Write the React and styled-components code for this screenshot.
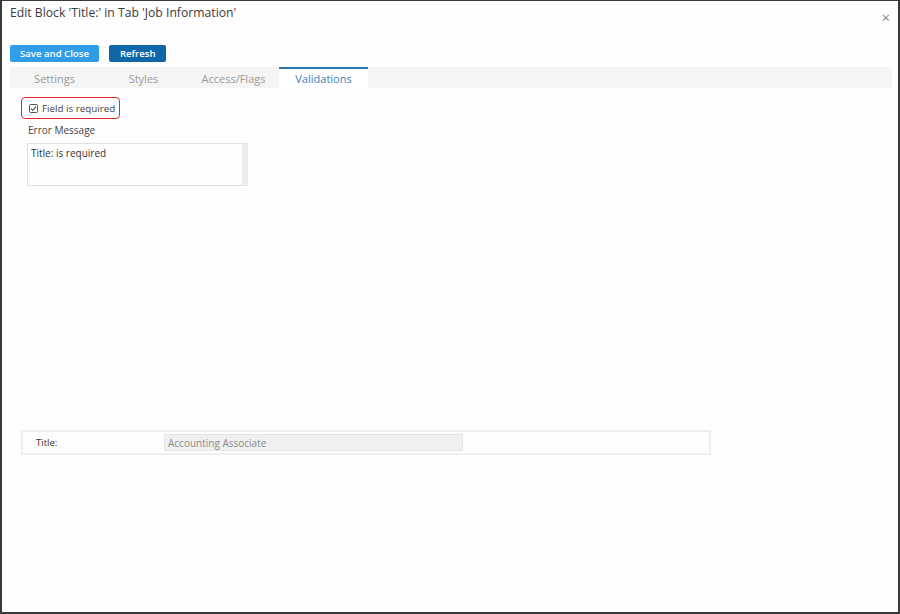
import React, { useState } from "react";
import styled, { createGlobalStyle } from "styled-components";

const Global = createGlobalStyle`
  html, body { margin: 0; padding: 0; background: #fff; }
  * { box-sizing: border-box; }
`;

const Frame = styled.div`
  width: 900px;
  height: 614px;
  background: #fefefe;
  border-style: solid;
  border-color: #3a3a3a;
  border-width: 1px 2px 2px 2px;
  font-family: "Open Sans", "Liberation Sans", sans-serif;
  color: #333;
  display: flex;
  flex-direction: column;
  padding: 0 6px 0 8px;
`;

const Header = styled.div`
  display: flex;
  justify-content: space-between;
  align-items: flex-start;
  height: 44px;
  padding-top: 3px;
`;

const Title = styled.div`
  font-size: 12.2px;
  color: #3c3c3c;
`;

const Close = styled.div`
  font-size: 15px;
  color: #888;
  line-height: 1;
  margin: 6px 2px 0 0;
  cursor: pointer;
`;

const Toolbar = styled.div`
  display: flex;
  gap: 10px;
  height: 22px;
`;

const Button = styled.button`
  height: 17px;
  padding: 0 ${(p) => (p.dark ? 11 : 10)}px;
  border: none;
  border-radius: 2px;
  background: ${(p) => (p.dark ? "#0f67a8" : "#2f9de8")};
  color: #fff;
  font-family: "Open Sans", "Liberation Sans", sans-serif;
  font-size: 9.6px;
  font-weight: 600;
  cursor: pointer;
`;

const Tabs = styled.div`
  display: flex;
  height: 21px;
  background: #f5f5f5;
`;

const Tab = styled.div`
  width: ${(p) => p.w}px;
  display: flex;
  align-items: center;
  justify-content: center;
  font-size: 11px;
  color: ${(p) => (p.active ? "#3b80ba" : "#9a9a9a")};
  background: ${(p) => (p.active ? "#fff" : "transparent")};
  border-top: 2px solid ${(p) => (p.active ? "#2b75b0" : "transparent")};
  cursor: pointer;
`;

const Content = styled.div`
  padding: 9px 0 0 11px;
  display: flex;
  flex-direction: column;
  align-items: flex-start;
`;

const Required = styled.label`
  display: flex;
  align-items: center;
  gap: 4px;
  height: 22px;
  padding: 0 4px 0 7px;
  border: 1.5px solid #e5262b;
  border-radius: 4px;
  font-size: 9.8px;
  color: #444;
  cursor: pointer;
`;

const Box = styled.span`
  width: 9px;
  height: 9px;
  border: 1px solid #555;
  border-radius: 1.5px;
  display: flex;
  align-items: center;
  justify-content: center;
`;

const FieldLabel = styled.div`
  font-size: 10px;
  color: #444;
  margin: 4px 0 0 7px;
`;

const Message = styled.div`
  margin: 6px 0 0 6px;
  width: 221px;
  height: 43px;
  border: 1px solid #e2e2e2;
  border-right: 6px solid #ececec;
  padding: 2px 3px;
  font-size: 10px;
  color: #333;
`;

const Preview = styled.div`
  margin-top: 244px;
  width: 690px;
  height: 25px;
  border: 2px solid #efefef;
  display: flex;
  align-items: center;
`;

const PreviewLabel = styled.div`
  width: 141px;
  padding-left: 13px;
  font-size: 9.5px;
  color: #333;
`;

const PreviewInput = styled.div`
  width: 299px;
  height: 17px;
  background: #f0f0f0;
  border: 1px solid #e4e4e4;
  padding: 0 3px;
  font-size: 10px;
  color: #8a8a8a;
  display: flex;
  align-items: center;
`;

const tabs = [
  { name: "Settings", w: 89 },
  { name: "Styles", w: 89 },
  { name: "Access/Flags", w: 91 },
  { name: "Validations", w: 89 },
];

export default function App() {
  const [active, setActive] = useState("Validations");
  const [checked, setChecked] = useState(true);

  return (
    <Frame>
      <Global />
      <Header>
        <Title>Edit Block 'Title:' in Tab 'Job Information'</Title>
        <Close>×</Close>
      </Header>
      <Toolbar>
        <Button>Save and Close</Button>
        <Button dark>Refresh</Button>
      </Toolbar>
      <Tabs>
        {tabs.map((t) => (
          <Tab key={t.name} w={t.w} active={active === t.name} onClick={() => setActive(t.name)}>
            {t.name}
          </Tab>
        ))}
      </Tabs>
      <Content>
        <Required onClick={() => setChecked(!checked)}>
          <Box>
            {checked && (
              <svg width="7" height="7" viewBox="0 0 7 7">
                <path d="M1 3.6 L2.8 5.3 L6 1.6" fill="none" stroke="#444" strokeWidth="1.1" />
              </svg>
            )}
          </Box>
          Field is required
        </Required>
        <FieldLabel>Error Message</FieldLabel>
        <Message>Title: is required</Message>
        <Preview>
          <PreviewLabel>Title:</PreviewLabel>
          <PreviewInput>Accounting Associate</PreviewInput>
        </Preview>
      </Content>
    </Frame>
  );
}
